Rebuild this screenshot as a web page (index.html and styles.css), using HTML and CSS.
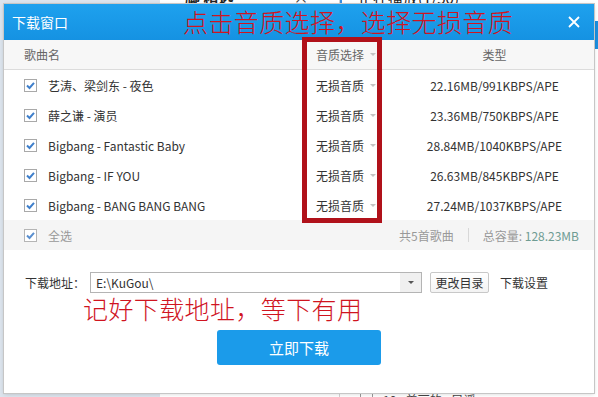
FILE: index.html
```html
<!DOCTYPE html>
<html lang="zh-CN">
<head>
<meta charset="utf-8">
<title>下载窗口</title>
<link rel="stylesheet" href="styles.css">
</head>
<body>
<div class="desk">
  <div class="desk-left"></div>
  <div class="desk-mid">
    <div class="peek"><span class="peek-b">脚 精选</span><span class="peek-x">×</span></div>
    <div class="peek-bottom"></div>
  </div>
  <div class="desk-right">
    <div class="peek2">正在播放(1/50)</div>
    <div class="side-blue"></div>
    <div class="peek-check"><span class="mini-box"></span><span>10 - 美丽的 - 民谣</span></div>
  </div>
</div>

<div class="dialog">
  <div class="titlebar">
    <span class="title">下载窗口</span>
    <span class="close">
      <svg width="12" height="12" viewBox="0 0 12 12"><path d="M1 1L11 11M11 1L1 11" stroke="#fff" stroke-width="1.8" fill="none"/></svg>
    </span>
  </div>
  <div class="thead">
    <div class="c-name">歌曲名</div>
    <div class="c-q">音质选择<span class="tri"></span></div>
    <div class="c-type">类型</div>
  </div>
  <div class="rows">
    <div class="row">
      <div class="c-name"><svg class="cb" width="13" height="13" viewBox="0 0 13 13"><rect x="0.5" y="0.5" width="12" height="12" fill="#fff" stroke="#a9a9a9"/><path d="M3 6.5L5.5 9L10 3.8" stroke="#3f7fcb" stroke-width="2" fill="none"/></svg><span>艺涛、梁剑东 - 夜色</span></div>
      <div class="c-q">无损音质<span class="tri"></span></div>
      <div class="c-type">22.16MB/991KBPS/APE</div>
    </div>
    <div class="row">
      <div class="c-name"><svg class="cb" width="13" height="13" viewBox="0 0 13 13"><rect x="0.5" y="0.5" width="12" height="12" fill="#fff" stroke="#a9a9a9"/><path d="M3 6.5L5.5 9L10 3.8" stroke="#3f7fcb" stroke-width="2" fill="none"/></svg><span>薛之谦 - 演员</span></div>
      <div class="c-q">无损音质<span class="tri"></span></div>
      <div class="c-type">23.36MB/750KBPS/APE</div>
    </div>
    <div class="row">
      <div class="c-name"><svg class="cb" width="13" height="13" viewBox="0 0 13 13"><rect x="0.5" y="0.5" width="12" height="12" fill="#fff" stroke="#a9a9a9"/><path d="M3 6.5L5.5 9L10 3.8" stroke="#3f7fcb" stroke-width="2" fill="none"/></svg><span>Bigbang - Fantastic Baby</span></div>
      <div class="c-q">无损音质<span class="tri"></span></div>
      <div class="c-type">28.84MB/1040KBPS/APE</div>
    </div>
    <div class="row">
      <div class="c-name"><svg class="cb" width="13" height="13" viewBox="0 0 13 13"><rect x="0.5" y="0.5" width="12" height="12" fill="#fff" stroke="#a9a9a9"/><path d="M3 6.5L5.5 9L10 3.8" stroke="#3f7fcb" stroke-width="2" fill="none"/></svg><span>Bigbang - IF YOU</span></div>
      <div class="c-q">无损音质<span class="tri"></span></div>
      <div class="c-type">26.63MB/845KBPS/APE</div>
    </div>
    <div class="row">
      <div class="c-name"><svg class="cb" width="13" height="13" viewBox="0 0 13 13"><rect x="0.5" y="0.5" width="12" height="12" fill="#fff" stroke="#a9a9a9"/><path d="M3 6.5L5.5 9L10 3.8" stroke="#3f7fcb" stroke-width="2" fill="none"/></svg><span>Bigbang - BANG BANG BANG</span></div>
      <div class="c-q">无损音质<span class="tri"></span></div>
      <div class="c-type">27.24MB/1037KBPS/APE</div>
    </div>
  </div>
  <div class="foot">
    <div class="c-all"><svg class="cb" width="13" height="13" viewBox="0 0 13 13"><rect x="0.5" y="0.5" width="12" height="12" fill="#fff" stroke="#b5b5b5"/><path d="M3 6.5L5.5 9L10 3.8" stroke="#5a8fcf" stroke-width="2" fill="none"/></svg><span>全选</span></div>
    <div class="summary"><span>共5首歌曲</span><span class="sep"></span><span>总容量: <em class="size">128.23MB</em></span></div>
  </div>
  <div class="addr">
    <span class="addr-label">下载地址：</span>
    <div class="input"><span class="path">E:\KuGou\</span><span class="drop"><span class="dtri"></span></span></div>
    <button class="btn-dir">更改目录</button>
    <span class="settings">下载设置</span>
  </div>
  <button class="btn-dl">立即下载</button>
</div>

<div class="redbox"></div>
<div class="note note1">点击音质选择，选择无损音质</div>
<div class="note note2">记好下载地址，等下有用</div>
</body>
</html>
```

FILE: styles.css
```css
* { box-sizing: border-box; }
body {
  margin: 0;
  width: 598px;
  height: 397px;
  overflow: hidden;
  position: relative;
  background: #fff;
  font-family: "Noto Sans CJK SC", "Noto Sans", sans-serif;
  font-size: 12px;
  color: #333;
}

/* backdrop app */
.desk { display: flex; height: 397px; }
.desk-left { width: 160px; background: #dce4ed; }
.desk-mid {
  width: 180px;
  border-right: 1px solid #d2d2d2;
  display: flex;
  flex-direction: column;
  justify-content: space-between;
}
.peek {
  margin-top: -11px;
  padding-left: 25px;
  display: flex;
  gap: 60px;
  font-size: 15px;
  font-weight: bold;
  color: #222;
  line-height: 16px;
}
.peek-x { font-weight: normal; color: #444; }
.desk-right { flex: 1; display: flex; flex-direction: column; }
.peek2 {
  margin-top: -10px;
  padding-left: 16px;
  border-left: 2px solid #3a8ee0;
  font-size: 15px;
  line-height: 15px;
  color: #222;
}
.side-blue { margin: 16px 0 0 auto; width: 6px; height: 28px; background: #1c8fdf; }
.peek-check {
  margin-top: auto;
  margin-bottom: -11px;
  padding-left: 20px;
  display: flex;
  gap: 10px;
  align-items: center;
  color: #444;
  font-size: 12px;
}
.mini-box { width: 13px; height: 13px; border: 1px solid #999; background: #fff; }

/* dialog */
.dialog {
  position: absolute;
  left: 4px;
  top: 4px;
  width: 590px;
  height: 389px;
  background: #fff;
  box-shadow: 0 0 0 1px #c6c6c6, 0 1px 4px rgba(0,0,0,0.18);
  display: flex;
  flex-direction: column;
}
.titlebar {
  height: 36px;
  flex: none;
  background: linear-gradient(#1ea1ee, #1592e2);
  display: flex;
  align-items: center;
  justify-content: space-between;
  padding-left: 8px;
  padding-right: 2px;
  color: #fff;
  font-size: 14px;
}
.close { width: 36px; display: flex; justify-content: center; align-items: center; }

.thead, .row {
  display: grid;
  grid-template-columns: 311px 80px 1fr;
  align-items: center;
}
.thead {
  height: 30px;
  background: #f7f7f7;
  border-bottom: 1px solid #dcdcdc;
  color: #666;
}
.thead .c-name { padding-left: 20px; }
.c-q { padding-left: 1px; display: flex; align-items: center; }
.c-type { text-align: center; }
.tri {
  margin-left: 6px;
  width: 0; height: 0;
  border-left: 3px solid transparent;
  border-right: 3px solid transparent;
  border-top: 3px solid #c4c4c4;
}
.rows { display: flex; flex-direction: column; }
.row { height: 30px; color: #333; }
.row .c-name, .c-all { display: flex; align-items: center; gap: 11px; padding-left: 20px; }
.cb { flex: none; }

.foot {
  height: 30px;
  background: #f5f5f5;
  display: flex;
  align-items: center;
  justify-content: space-between;
  padding-right: 15px;
  color: #999;
}
.summary { display: flex; align-items: center; gap: 14px; }
.sep { width: 1px; height: 14px; background: #d8d8d8; }
.size { font-style: normal; color: #6f9c93; }

.addr {
  margin-top: 22px;
  height: 21px;
  display: flex;
  align-items: center;
  padding-left: 21px;
  color: #333;
}
.addr-label { width: 65px; }
.input {
  width: 332px;
  height: 21px;
  border: 1px solid #b4b4b4;
  display: flex;
  align-items: center;
  justify-content: space-between;
}
.path { padding-left: 5px; }
.drop {
  width: 21px;
  height: 19px;
  background: #f0f0f0;
  display: flex;
  align-items: center;
  justify-content: center;
}
.dtri {
  width: 0; height: 0;
  border-left: 3px solid transparent;
  border-right: 3px solid transparent;
  border-top: 3px solid #555;
}
.btn-dir {
  margin-left: 8px;
  width: 59px;
  height: 21px;
  padding: 0;
  border: 1px solid #c8c8c8;
  border-radius: 2px;
  background: linear-gradient(#fff, #f3f3f3);
  font-family: inherit;
  font-size: 12px;
  color: #333;
}
.settings { margin-left: 11px; }

.btn-dl {
  margin-top: 37px;
  align-self: center;
  width: 164px;
  height: 35px;
  border: none;
  border-radius: 3px;
  background: #1b9bea;
  color: #fff;
  font-family: inherit;
  font-size: 15px;
  padding: 0;
}

/* annotations */
.redbox {
  position: absolute;
  left: 302px;
  top: 37px;
  width: 80px;
  height: 186px;
  border: 5px solid #b0111a;
}
.note {
  position: absolute;
  font-size: 25px;
  font-weight: 300;
  line-height: 34px;
  color: #d0141f;
  letter-spacing: 0.4px;
  white-space: nowrap;
}
.note1 { left: 183px; top: 4px; }
.note2 { left: 83px; top: 291px; }
```
